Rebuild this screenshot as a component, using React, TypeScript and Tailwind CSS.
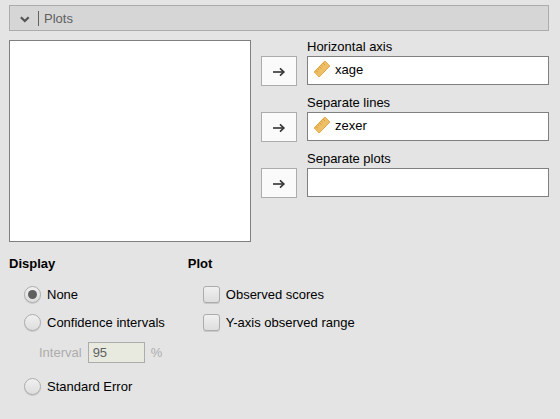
import { useState } from "react";

function RulerIcon() {
  return (
    <svg width="18" height="18" viewBox="0 0 18 18" aria-hidden="true">
      <path d="M11.8 1 16.8 6 6.2 17 1.2 12Z" fill="#edbf66" stroke="#e3a63c" strokeWidth="1" strokeLinejoin="round" />
      <path d="M10.2 3.2l1.6 1.6M8.4 5l1.1 1.1M6.6 6.9l1.6 1.6M4.8 8.7l1.1 1.1M3 10.6l1.6 1.6" stroke="#cf9636" strokeWidth="1" fill="none" />
    </svg>
  );
}

function ArrowIcon() {
  return (
    <svg width="14" height="12" viewBox="0 0 14 12" fill="none" stroke="#333" strokeWidth="1.6" aria-hidden="true">
      <path d="M1 6h11" />
      <path d="M8 2.3 11.9 6 8 9.7" />
    </svg>
  );
}

function TargetRow({ id, label, value }: { id: string; label: string; value?: string }) {
  return (
    <div className="grid grid-cols-[36px_1fr] gap-x-2.5">
      <span id={id} className="col-start-2 h-4 leading-[14px]">
        {label}
      </span>
      <button
        type="button"
        aria-label={`Assign to ${label}`}
        className="col-start-1 flex h-[30px] items-center justify-center border border-[#acacac] bg-[#fafafa] pt-0.5"
      >
        <ArrowIcon />
      </button>
      <ul aria-labelledby={id} className="h-[29px] border border-[#808080] bg-white px-[5px] py-[3px]">
        {value && (
          <li className="flex h-5 items-start gap-1 leading-5">
            <RulerIcon />
            {value}
          </li>
        )}
      </ul>
    </div>
  );
}

const controlStyle =
  "m-0 size-[17px] shrink-0 appearance-none border border-[#acacac] bg-linear-to-b from-[#f0f0f0] to-[#dedede] shadow-[0_1px_0_#c8c8c8]";

function RadioOption({ label, checked, onSelect }: { label: string; checked: boolean; onSelect: () => void }) {
  return (
    <label className="flex h-[18px] items-start gap-1.5 leading-[18px]">
      <input
        type="radio"
        name="display"
        checked={checked}
        onChange={onSelect}
        className={`${controlStyle} grid place-items-center rounded-full before:size-[9px] before:rounded-full before:content-[''] checked:before:bg-[#606060]`}
      />
      {label}
    </label>
  );
}

function CheckOption({ label }: { label: string }) {
  return (
    <label className="flex h-[18px] items-start gap-1.5 leading-[18px]">
      <input type="checkbox" className={`${controlStyle} rounded-[3px] checked:bg-[#606060]`} />
      {label}
    </label>
  );
}

export default function App() {
  const [display, setDisplay] = useState("none");
  return (
    <main className="min-h-screen bg-[#e4e4e4] pt-[5px] pr-[11px] pb-5 pl-[9px] font-['Liberation_Sans',Arial,sans-serif] text-[13px] leading-4 text-black">
      <button
        type="button"
        aria-expanded="true"
        className="flex h-[26px] w-full items-center border border-[#acacac] bg-[#d6d6d6] pl-2.5 text-[#606060]"
      >
        <svg width="10" height="8" viewBox="0 0 10 8" fill="none" aria-hidden="true" className="mt-0.5">
          <path d="M0.9 2.2 4.8 6 8.7 2.2" stroke="#555" strokeWidth="2.2" />
        </svg>
        <span className="ml-2 h-[15px] border-l border-[#606060] pl-[5px] leading-[15px]">Plots</span>
      </button>

      <section className="mt-[9px] grid grid-cols-[1fr_36px_1fr] gap-x-2.5">
        <ul aria-label="Available factors" className="h-[202px] border border-[#808080] bg-white" />
        <div className="col-span-2 flex flex-col gap-2.5">
          <TargetRow id="horizontal-axis" label="Horizontal axis" value="xage" />
          <TargetRow id="separate-lines" label="Separate lines" value="zexer" />
          <TargetRow id="separate-plots" label="Separate plots" />
        </div>
      </section>

      <div className="mt-3.5 flex gap-[23px]">
        <section>
          <h2 className="font-bold">Display</h2>
          <div className="mt-3.5 flex flex-col gap-2.5 pl-[15px]">
            <RadioOption label="None" checked={display === "none"} onSelect={() => setDisplay("none")} />
            <RadioOption label="Confidence intervals" checked={display === "ci"} onSelect={() => setDisplay("ci")} />
            <div className="mb-1 flex h-[22px] items-start gap-1.5 pl-[15px] leading-[22px] text-[#acacac]">
              <label htmlFor="interval">Interval</label>
              <input
                id="interval"
                type="text"
                defaultValue="95"
                disabled={display !== "ci"}
                className="h-[21px] w-[57px] border border-[#acacac] bg-[#e8eae0] px-1 text-[#606060]"
              />
              <span>%</span>
            </div>
            <RadioOption label="Standard Error" checked={display === "se"} onSelect={() => setDisplay("se")} />
          </div>
        </section>
        <section>
          <h2 className="font-bold">Plot</h2>
          <div className="mt-3.5 flex flex-col gap-2.5 pl-[15px]">
            <CheckOption label="Observed scores" />
            <CheckOption label="Y-axis observed range" />
          </div>
        </section>
      </div>
    </main>
  );
}
